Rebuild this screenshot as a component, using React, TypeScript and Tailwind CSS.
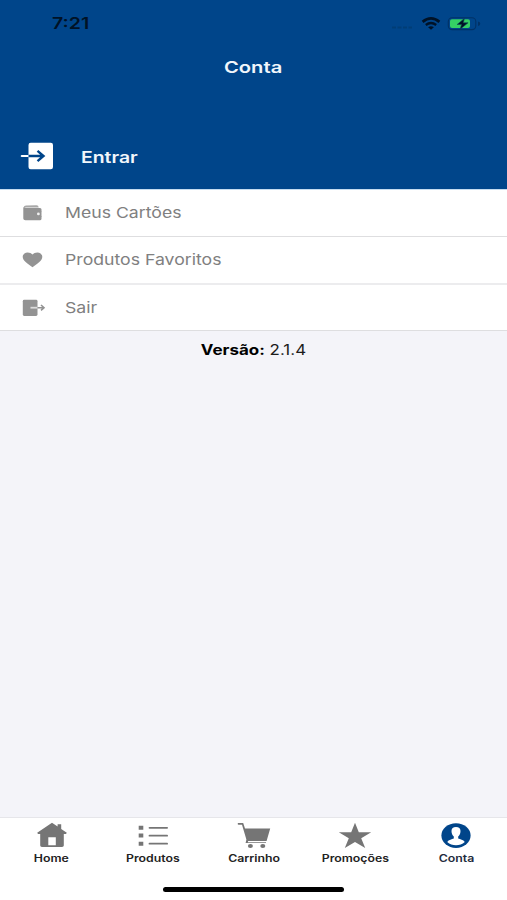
import type { ReactNode } from 'react'
import clsx from 'clsx'

interface MenuItem {
  label: string
  icon: ReactNode
  className: string
}

interface Tab {
  label: string
  icon: ReactNode
  active?: boolean
}

const WalletIcon = () => (
  <svg width="26" height="20" viewBox="0 0 26 20" fill="#939393">
    <path d="M3.5 4.5Q4 2.6 6 2.5L16.6 2.2Q18.4 2.2 18.8 4.4L6 4.4Q4.8 4.5 4.4 5Z" fill="#a8a8a8" />
    <path d="M3.3 4.2Q4 5 5.6 5H20Q21.5 5 21.5 6.5V8.6H19Q17 8.6 17 11Q17 13.2 19 13.2H21.5V15.8Q21.5 17.3 19.8 17.3H5.4Q3.3 17.3 3.3 15.5Z" />
    <rect x="16.5" y="8" width="5" height="6" />
    <ellipse cx="18.4" cy="10.9" rx="1.4" ry="1.3" fill="#f2f2f2" />
  </svg>
)

const HeartIcon = () => (
  <svg width="26" height="20" viewBox="0 0 26 20" fill="#939393">
    <path d="M12.5 17.3C8 13.8 2.7 10.8 2.7 6.7C2.7 4.2 5 2.4 7.6 2.4C9.6 2.4 11.4 3.1 12.5 4.6C13.6 3.1 15.4 2.4 17.4 2.4C20 2.4 22.3 4.2 22.3 6.7C22.3 10.8 17 13.8 12.5 17.3Z" />
  </svg>
)

const ExitIcon = () => (
  <svg width="26" height="20" viewBox="0 0 26 20" fill="none">
    <rect x="2.8" y="1.8" width="14.7" height="16.2" rx="1.4" fill="#939393" />
    <path d="M10.5 9.7H17.5" stroke="#dcdcdc" strokeWidth="1.8" />
    <path d="M17.5 9.7H24M21 7L24 9.7L21 12.4" stroke="#939393" strokeWidth="1.6" />
  </svg>
)

const EnterIcon = () => (
  <svg width="34" height="30" viewBox="0 0 34 30" fill="none">
    <rect x="8.5" y="1.8" width="24.5" height="26.5" rx="2.2" fill="#fff" />
    <path d="M1.8 15H8.5" stroke="#fff" strokeWidth="2.2" strokeLinecap="round" />
    <path d="M8.5 15H23.5M17.5 9.9L23.5 15L17.5 20.1" stroke="#00458a" strokeWidth="2.4" />
  </svg>
)

const HomeIcon = () => (
  <svg width="32" height="28" viewBox="0 0 32 28" fill="#757575">
    <path fillRule="evenodd" d="M16 .8L21.6 4.5V2.2H25.2V7.1L30.8 10.8L30 12H27.8V23.6Q27.8 25 26 25H6Q4.2 25 4.2 23.6V12H2L1.2 10.8ZM12.3 15.2V23.3H19.8V15.2Z" />
  </svg>
)

const ListIcon = () => (
  <svg width="32" height="28" viewBox="0 0 32 28" fill="#757575">
    <path d="M1.7 3.7H6.3V7.7H1.7ZM1.7 11.6H6.3V15.6H1.7ZM1.7 19.7H6.3V23.7H1.7Z" />
    <rect x="11.6" y="4.9" width="19.4" height="1.8" rx=".9" />
    <rect x="11.6" y="12.8" width="19.4" height="1.8" rx=".9" />
    <rect x="11.6" y="20.8" width="19.4" height="1.8" rx=".9" />
  </svg>
)

const CartIcon = () => (
  <svg width="34" height="28" viewBox="0 0 34 28" fill="#757575">
    <path d="M1 1.1H6.2L8 6.5H33.2L29.6 19H11.2L10.8 20.3H29V21H8.6L9.4 17.6L5 2.8H1.6Q.2 2.4 1 1.1Z" />
    <ellipse cx="13.4" cy="23.9" rx="2.5" ry="2" />
    <ellipse cx="25.8" cy="23.9" rx="2.5" ry="2" />
  </svg>
)

const StarIcon = () => (
  <svg width="34" height="28" viewBox="0 0 34 28" fill="#757575">
    <path d="M17 .8L20.8 10.2H33.2L23.2 16.3L27.2 26L17 20.1L6.8 26L10.8 16.3L.8 10.2H13.2Z" />
  </svg>
)

const UserIcon = () => (
  <svg width="32" height="28" viewBox="0 0 32 28">
    <ellipse cx="16" cy="13.6" rx="14.6" ry="12.4" fill="#00458a" />
    <path d="M16 4.9C18.9 4.9 20.5 6.4 20.5 9C20.5 11.4 19.6 13.2 18.2 14.4V16.6C20 17.5 23.4 17.8 24.8 20Q21 23.3 16 23.3Q11 23.3 7.2 20C8.6 17.8 12 17.5 13.8 16.6V14.4C12.4 13.2 11.5 11.4 11.5 9C11.5 6.4 13.1 4.9 16 4.9Z" fill="#fff" />
  </svg>
)

const StatusIcons = () => (
  <svg width="94" height="20" viewBox="0 0 94 20" fill="none">
    <path d="M2 13.5H22" stroke="#003766" strokeWidth="2" strokeDasharray="4 1.5" opacity=".55" />
    <path d="M32.6 7.8Q41 1 49.4 7.8" stroke="#001226" strokeWidth="2.8" />
    <path d="M35.8 11Q41 7.1 46.2 11" stroke="#001226" strokeWidth="2.4" />
    <path d="M38.1 13.3Q41 11.3 43.9 13.3L41 15.8Z" fill="#001226" />
    <rect x="58.3" y="3.8" width="27.5" height="11.8" rx="3.8" stroke="#003266" strokeWidth="1.1" />
    <path d="M88 7.6Q90.3 8 90.3 9.8Q90.3 11.5 88 12Z" fill="#003266" />
    <rect x="60" y="5.3" width="20" height="8.7" rx="2" fill="#35d164" />
    <path d="M74.4 4.4L67.1 10.5H71.5L70.1 15.2L78.1 8.8H73.3Z" fill="#001226" stroke="#0a4a55" strokeWidth=".6" />
  </svg>
)

const menu: MenuItem[] = [
  { label: 'Meus Cartões', icon: <WalletIcon />, className: 'h-[47px] border-b border-[#dedee0]' },
  { label: 'Produtos Favoritos', icon: <HeartIcon />, className: 'h-[48px] border-b-2 border-[#ececee]' },
  { label: 'Sair', icon: <ExitIcon />, className: 'h-[46px] border-b border-[#dedee0]' },
]

const tabs: Tab[] = [
  { label: 'Home', icon: <HomeIcon /> },
  { label: 'Produtos', icon: <ListIcon /> },
  { label: 'Carrinho', icon: <CartIcon /> },
  { label: 'Promoções', icon: <StarIcon /> },
  { label: 'Conta', icon: <UserIcon />, active: true },
]

export default function App() {
  return (
    <div className="flex h-[900px] w-full flex-col overflow-hidden bg-[#f4f4f9] font-['Inter',sans-serif]">
      <header className="flex h-[190px] flex-none flex-col border-b border-[#c5dcf0] bg-[#00458a] text-[#f1f6fb]">
        <div className="flex h-12 items-center justify-between pr-[23px] pl-[52px]">
          <span className="origin-left scale-x-[1.26] text-[15.5px] font-semibold text-[#001226]">7:21</span>
          <StatusIcons />
        </div>
        <h1 className="flex h-[38px] items-center justify-center">
          <span className="scale-x-[1.26] text-base font-semibold">Conta</span>
        </h1>
        <button className="mt-auto flex h-[66px] items-center pl-5 text-left">
          <EnterIcon />
          <span className="ml-[27px] origin-left scale-x-[1.25] pt-[3px] text-[15.5px] font-semibold">Entrar</span>
        </button>
      </header>

      <nav className="flex-none bg-white">
        {menu.map(item => (
          <button key={item.label} className={clsx('flex w-full items-center pl-5 text-left', item.className)}>
            {item.icon}
            <span className="ml-[18.5px] origin-left scale-x-[1.177] pt-px text-[15px] text-[#808080]">{item.label}</span>
          </button>
        ))}
      </nav>

      <p className="mt-[9px] flex justify-center">
        <span className="scale-x-[1.21] text-sm text-[#1c1c1c]"><b className="text-black">Versão:</b> 2.1.4</span>
      </p>

      <footer className="mt-auto flex h-[83px] flex-none flex-col border-t border-[#e6e6ea] bg-white">
        <div className="grid grid-cols-5 pt-1 pl-px">
          {tabs.map(tab => (
            <button key={tab.label} className="flex flex-col items-center">
              {tab.icon}
              <span className={clsx('scale-x-[1.23] text-[10px] leading-4 font-semibold', tab.active ? 'text-[#1f2c3d]' : 'text-[#222]')}>
                {tab.label}
              </span>
            </button>
          ))}
        </div>
        <div className="mx-auto mt-auto mb-2 h-[5px] w-[181px] rounded-full bg-black" />
      </footer>
    </div>
  )
}
